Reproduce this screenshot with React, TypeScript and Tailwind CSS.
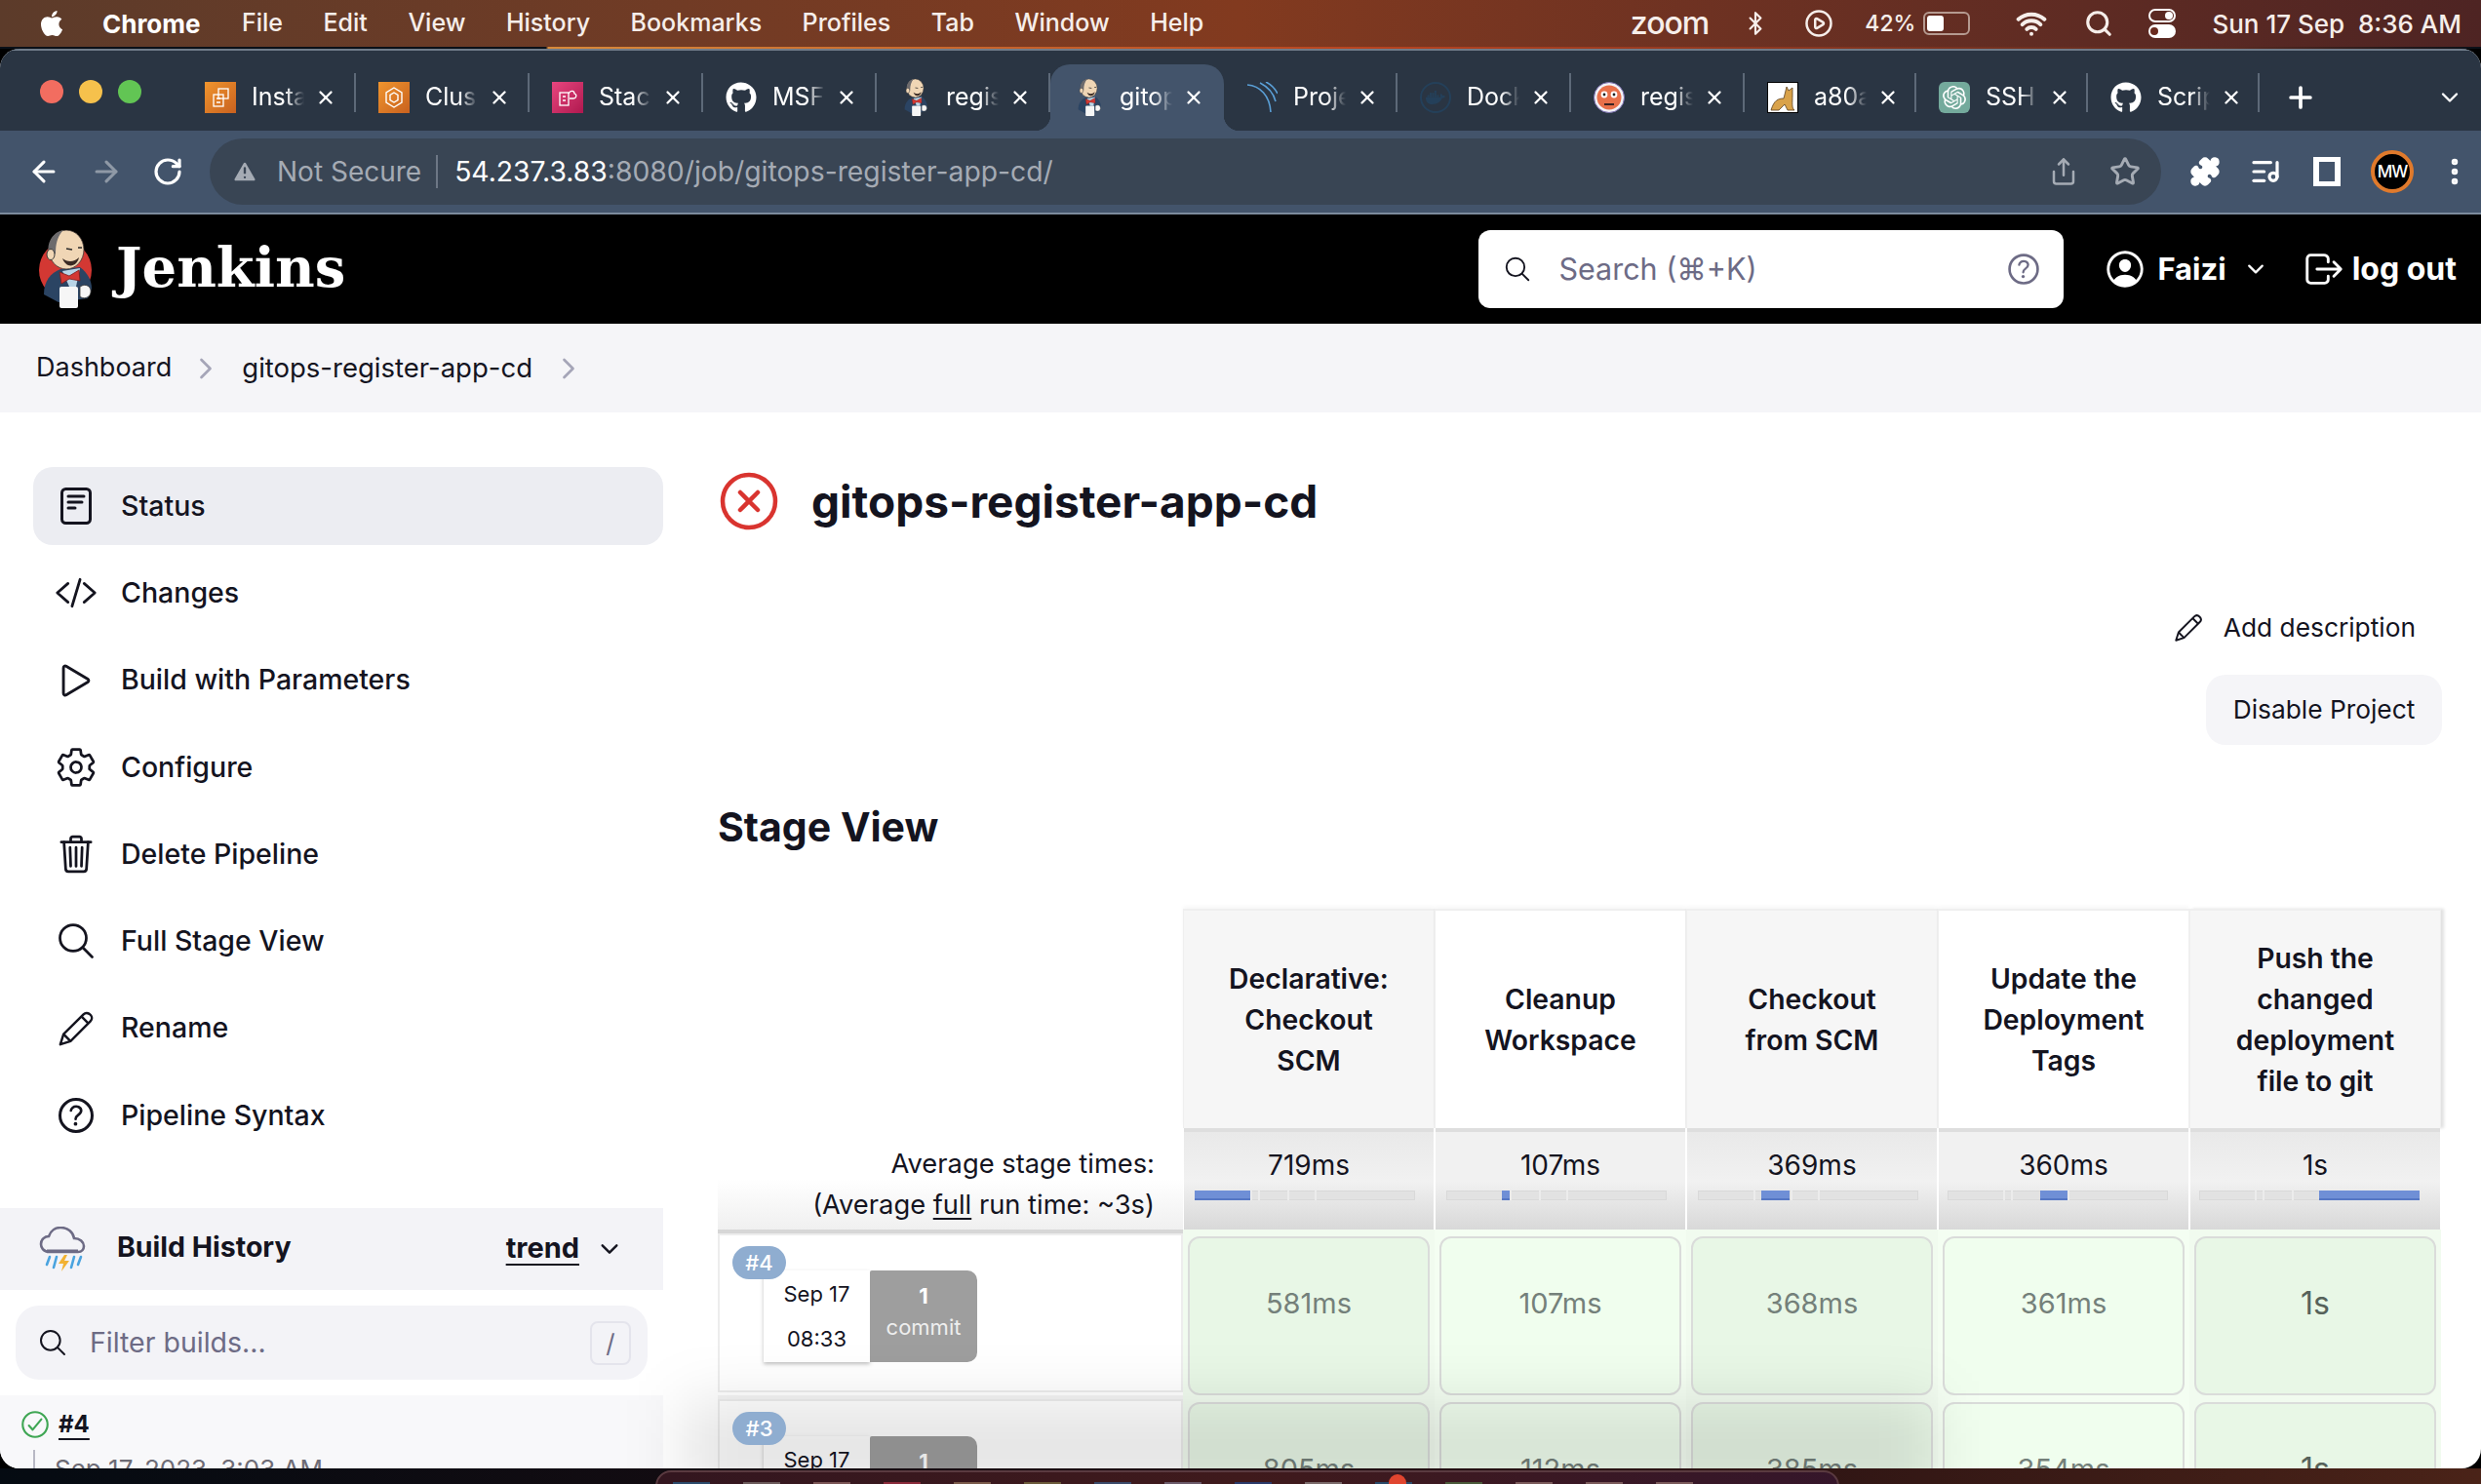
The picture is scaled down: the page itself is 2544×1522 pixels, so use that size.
import { ReactNode } from "react";
import {
  ArrowLeft,
  ArrowRight,
  Bluetooth,
  ChevronDown,
  ChevronRight,
  CirclePlay,
  ListMusic,
  MoreVertical,
  Plus,
  Puzzle,
  RotateCw,
  Search,
  Share,
  Star,
  TriangleAlert,
  Wifi,
  X,
} from "lucide-react";
import { FaApple, FaGithub, FaDocker } from "react-icons/fa";
import { SiOpenai } from "react-icons/si";
import {
  IoCheckmarkCircleOutline,
  IoChevronDown,
  IoCloseCircleOutline,
  IoCodeSlashOutline,
  IoHelpCircleOutline,
  IoLogOutOutline,
  IoPersonCircleOutline,
  IoPlayOutline,
  IoSearchOutline,
  IoSettingsOutline,
  IoTrashOutline,
} from "react-icons/io5";

function JenkinsLogo({ className, circle = true }: { className?: string; circle?: boolean }) {
  return (
    <svg viewBox="0 0 58 80" className={className}>
      {circle && <ellipse cx="29" cy="41" rx="27" ry="29" fill="#d33833" />}
      <path d="M7 66 C7 52 14 44 24 40 L44 38 C52 44 56 52 56 60 L52 70 L22 74 Z" fill="#2b4463" />
      <path d="M26 42 L44 39 L40 58 L33 58 Z" fill="#b8d4e6" />
      <ellipse cx="30" cy="20" rx="18" ry="20" fill="#f0d6b5" stroke="#3a3230" strokeWidth="0.8" />
      <path d="M13 28 C8 14 16 2 27 0 C21 6 19 14 19 24 Z" fill="#6d6b6d" />
      <ellipse cx="14" cy="25" rx="4" ry="5.5" fill="#f0d6b5" stroke="#3a3a3a" strokeWidth="1" />
      <path d="M30 19 L36 20 M42 18 L46 18" stroke="#2a2a2a" strokeWidth="1.6" />
      <path d="M26 29 C31 33 38 33 43 28 C41 38 30 40 26 29 Z" fill="#3a2a24" />
      <path d="M23 43 L33 47 L43 41 L44 52 L33 50 L25 55 Z" fill="#d33833" stroke="#7d1c1a" strokeWidth="0.8" />
      <rect x="23" y="58" width="19" height="22" rx="2" fill="#f6f6f6" />
      <path d="M44 58 C50 54 56 58 55 64 C54 70 47 71 44 68 Z" fill="#f6f6f6" stroke="#3a3a3a" strokeWidth="0.8" />
    </svg>
  );
}

function StatusIcon({ className }: { className?: string }) {
  return (
    <svg viewBox="0 0 32 38" fill="none" stroke="currentColor" strokeWidth="3" strokeLinecap="round" className={className}>
      <rect x="1.5" y="1.5" width="29" height="35" rx="4" />
      <path d="M8 9 H24 M8 15 H22 M8 21 H15" />
    </svg>
  );
}

function PencilIcon({ className }: { className?: string }) {
  return (
    <svg viewBox="0 0 40 40" fill="none" stroke="currentColor" strokeWidth="2.6" strokeLinejoin="round" className={className}>
      <path d="M3 37 L6.5 26 L28 4.5 C30 2.5 33 2.5 35.5 5 C37.5 7 37.5 10 35.5 12 L14 33.5 Z" />
      <path d="M26 7 L33 14 M6.5 26 L14 33.5" />
    </svg>
  );
}

function WeatherIcon() {
  return (
    <svg viewBox="0 0 48 46" className="h-[46px] w-[48px]" fill="none">
      <path
        d="M11 26 C4 26 2 21 2 18 C2 13 6 10 10 10 C12 4 17 1 22 1 C30 1 35 6 36 12 C42 12 46 16 46 20 C46 23 44 26 40 26 Z"
        stroke="#6d6b85"
        strokeWidth="2.6"
      />
      <path d="M8 25 H40" stroke="#6d6b85" strokeWidth="3" />
      <path d="M11 31 L8 39 M18 31 L15 42 M36 31 L33 42 M43 31 L40 39" stroke="#4aa3df" strokeWidth="2.6" strokeLinecap="round" />
      <path d="M26 29 L20 38 H25 L23 46 L31 35 H26 L29 29 Z" fill="#f2b233" />
    </svg>
  );
}

function Square({ bg, children }: { bg: string; children: ReactNode }) {
  return <div className={`flex h-[32px] w-[32px] items-center justify-center ${bg}`}>{children}</div>;
}

const tabs: { title: string; icon: ReactNode; active?: boolean; narrow?: boolean }[] = [
  {
    title: "Insta",
    icon: (
      <Square bg="bg-gradient-to-br from-[#f0952e] to-[#c8611f]">
        <svg viewBox="0 0 24 24" className="h-[24px] w-[24px]" fill="none" stroke="white" strokeWidth="1.3">
          <rect x="10" y="3" width="10" height="10" />
          <rect x="5" y="9" width="10" height="12" />
          <path d="M8 13 H12 M8 17 H12" />
        </svg>
      </Square>
    ),
  },
  {
    title: "Clus",
    icon: (
      <Square bg="bg-gradient-to-br from-[#f0952e] to-[#c8611f]">
        <svg viewBox="0 0 24 24" className="h-[24px] w-[24px]" fill="none" stroke="white" strokeWidth="1.4">
          <path d="M12 2 L20 7 V17 L12 22 L4 17 V7 Z" />
          <path d="M12 7 L16 9.5 V14.5 L12 17 L8 14.5 V9.5 Z" />
        </svg>
      </Square>
    ),
  },
  {
    title: "Stac",
    icon: (
      <Square bg="bg-gradient-to-br from-[#e7457f] to-[#b0174f]">
        <svg viewBox="0 0 24 24" className="h-[24px] w-[24px]" fill="none" stroke="white" strokeWidth="1.3">
          <rect x="4" y="7" width="9" height="13" />
          <path d="M7 11 H10 M7 15 H10 M13 8 C15 4 19 5 19 8 C22 9 21 13 18 13 H14" />
        </svg>
      </Square>
    ),
  },
  { title: "MSF", icon: <FaGithub className="h-[32px] w-[32px] text-white" /> },
  { title: "regis", icon: <JenkinsLogo circle={false} className="h-[38px] w-[28px]" /> },
  { title: "gitop", icon: <JenkinsLogo circle={false} className="h-[38px] w-[28px]" />, active: true },
  {
    title: "Proje",
    icon: (
      <svg viewBox="0 0 32 32" className="h-[32px] w-[32px]" fill="none" stroke="#5a9fd6" strokeWidth="1.6">
        <path d="M1 3 C14 4 24 14 25 31" />
        <path d="M14 1 C22 5 28 12 30 20" />
        <path d="M20 0 C26 3 30 8 32 12" />
      </svg>
    ),
  },
  {
    title: "Dock",
    icon: (
      <div className="flex h-[32px] w-[32px] items-center justify-center rounded-full border-[2px] border-[#24405a]">
        <FaDocker className="h-[20px] w-[20px] text-[#24405a]" />
      </div>
    ),
  },
  {
    title: "regis",
    icon: (
      <svg viewBox="0 0 32 32" className="h-[32px] w-[32px]">
        <circle cx="16" cy="16" r="15.5" fill="#f3f3f8" stroke="#7a6fb0" />
        <circle cx="16" cy="16" r="12.5" fill="#e8704a" />
        <circle cx="11" cy="13" r="3.4" fill="white" />
        <circle cx="21" cy="13" r="3.4" fill="white" />
        <circle cx="11" cy="13" r="1.4" fill="#222" />
        <circle cx="21" cy="13" r="1.4" fill="#222" />
        <path d="M11 23 H21" stroke="#3a2222" strokeWidth="2" />
      </svg>
    ),
  },
  {
    title: "a80a",
    narrow: true,
    icon: (
      <div className="flex h-[32px] w-[32px] items-center justify-center border border-black bg-white">
        <svg viewBox="0 0 30 30" className="h-[30px] w-[30px]">
          <path d="M3 28 C6 18 10 16 16 16 L19 4 L21 8 L25 5 L25 13 C25 20 24 26 27 28 H20 L17 22 L11 28 Z" fill="#d9a24a" stroke="#5a4020" strokeWidth="0.8" />
        </svg>
      </div>
    ),
  },
  {
    title: "SSH",
    narrow: true,
    icon: (
      <div className="flex h-[32px] w-[32px] items-center justify-center rounded-[6px] bg-[#74aa9c]">
        <SiOpenai className="h-[24px] w-[24px] text-white" />
      </div>
    ),
  },
  { title: "Scrip", narrow: true, icon: <FaGithub className="h-[32px] w-[32px] text-white" /> },
];

function ChromeTab({ title, icon, active, narrow }: { title: string; icon: ReactNode; active?: boolean; narrow?: boolean }) {
  return (
    <div
      className={`relative flex h-[68px] shrink-0 items-center pl-[23px] ${narrow ? "w-[176px]" : "w-[178px]"} ${active ? "rounded-t-[20px] bg-[#43546b]" : ""}`}
    >
      {active && (
        <>
          <div className="absolute bottom-0 right-full h-[16px] w-[16px] bg-[radial-gradient(circle_at_0%_0%,transparent_16px,#43546b_16.5px)]" />
          <div className="absolute bottom-0 left-full h-[16px] w-[16px] bg-[radial-gradient(circle_at_100%_0%,transparent_16px,#43546b_16.5px)]" />
        </>
      )}
      <div className="flex w-[32px] justify-center">{icon}</div>
      <span className="ml-[16px] w-[54px] overflow-hidden whitespace-nowrap text-[25px] text-white [mask-image:linear-gradient(to_right,black_65%,transparent)]">
        {title}
      </span>
      <X className="ml-[11px] h-[22px] w-[22px] text-white" strokeWidth={2.5} />
      {!active && <div className="absolute right-0 top-[9px] h-[40px] w-[2px] bg-[#5d6978]" />}
    </div>
  );
}

function MenuBar() {
  return (
    <div className="flex h-[48px] shrink-0 items-center bg-gradient-to-r from-[#5c3b2a] via-[#823a1f] to-[#4e2423] pl-[39px] pr-[20px] text-[25px] font-medium text-[#f6eeea]">
      <FaApple className="h-[30px] w-[28px] text-white" />
      <span className="ml-[38px] w-[102px] text-[26px] font-bold text-white">Chrome</span>
      <div className="ml-[41px] flex gap-[41.5px]">
        {["File", "Edit", "View", "History", "Bookmarks", "Profiles", "Tab", "Window", "Help"].map((m) => (
          <span key={m}>{m}</span>
        ))}
      </div>
      <div className="ml-auto flex items-center text-[26px]">
        <span className="mr-[35px] text-[32px] font-medium leading-none tracking-[-1px]">zoom</span>
        <Bluetooth className="mr-[37px] h-[30px] w-[26px]" />
        <CirclePlay className="mr-[32px] h-[30px] w-[30px]" />
        <span className="mr-[8px] text-[23px]">42%</span>
        <div className="relative mr-[47px] flex h-[24px] w-[48px] rounded-[6px] border-[2px] border-[#b59a90] p-[2px]">
          <div className="h-full w-[17px] rounded-[3px] bg-white" />
        </div>
        <Wifi className="mr-[38px] h-[32px] w-[32px]" strokeWidth={3} />
        <Search className="mr-[36px] h-[30px] w-[30px]" strokeWidth={2.5} />
        <div className="mr-[37px] flex flex-col gap-[2px]">
          <div className="flex h-[14px] w-[28px] items-center justify-end rounded-full border-[2px] border-white pr-[1px]">
            <div className="h-[8px] w-[8px] rounded-full bg-white" />
          </div>
          <div className="flex h-[14px] w-[28px] items-center rounded-full bg-white pl-[2px]">
            <div className="h-[8px] w-[8px] rounded-full bg-[#6a2a1e]" />
          </div>
        </div>
        <span>Sun 17 Sep&nbsp; 8:36 AM</span>
      </div>
    </div>
  );
}

function TabStrip() {
  return (
    <div className="relative flex h-[84px] shrink-0 items-end border-t-[2px] border-[#6f7b89] bg-[#2a3543] pl-[187px]">
      <div className="absolute left-[41px] top-[30px] flex gap-[16px]">
        <div className="h-[24px] w-[24px] rounded-full bg-[#f26d60]" />
        <div className="h-[24px] w-[24px] rounded-full bg-[#f6c14c]" />
        <div className="h-[24px] w-[24px] rounded-full bg-[#62c554]" />
      </div>
      {tabs.map((t, i) => (
        <ChromeTab key={i} {...t} />
      ))}
      <div className="flex h-[68px] flex-1 items-center pl-[25px] pr-[18px]">
        <Plus className="h-[34px] w-[34px] text-white" strokeWidth={2.6} />
        <ChevronDown className="ml-auto h-[28px] w-[28px] text-white" />
      </div>
    </div>
  );
}

function Toolbar() {
  return (
    <div className="flex h-[86px] shrink-0 items-start border-b-[2px] border-[#7c8a9c] bg-[#43546b] pt-[8px]">
      <div className="flex h-[68px] w-[215px] items-center pl-[28px] text-white">
        <ArrowLeft className="h-[34px] w-[34px]" strokeWidth={2.2} />
        <ArrowRight className="ml-[30px] h-[34px] w-[34px] text-[#8f99a6]" strokeWidth={2.2} />
        <RotateCw className="ml-[30px] h-[32px] w-[32px]" strokeWidth={2.4} />
      </div>
      <div className="flex h-[68px] w-[2001px] items-center rounded-full bg-[#394554] pl-[22px] pr-[21px] text-[28px]">
        <TriangleAlert className="h-[28px] w-[28px] fill-[#a5abb4] text-[#394554]" />
        <span className="ml-[19px] text-[#a5abb4]">Not Secure</span>
        <div className="ml-[15px] h-[34px] w-[2px] bg-[#6d7785]" />
        <span className="ml-[17px] text-[28.3px] text-white">54.237.3.83</span>
        <span className="text-[28.3px] text-[#a5abb4]">:8080/job/gitops-register-app-cd/</span>
        <Share className="ml-auto h-[30px] w-[30px] text-[#a5abb4]" />
        <Star className="ml-[32px] h-[32px] w-[32px] text-[#a5abb4]" strokeWidth={2.2} />
      </div>
      <div className="flex h-[68px] flex-1 items-center pl-[29px] text-white">
        <Puzzle className="h-[32px] w-[32px] fill-white" />
        <ListMusic className="ml-[30px] h-[32px] w-[32px]" strokeWidth={2.4} />
        <div className="ml-[33px] h-[30px] w-[28px] border-y-[5px] border-l-[6px] border-r-[6px] border-white" />
        <div className="ml-[31px] flex h-[44px] w-[44px] items-center justify-center rounded-full border-[4px] border-[#e07a2c] bg-black">
          <span className="text-[17px] font-medium leading-none tracking-[-1px]">MW</span>
        </div>
        <MoreVertical className="ml-[25px] h-[34px] w-[34px]" strokeWidth={2.6} />
      </div>
    </div>
  );
}

function JenkinsHeader() {
  return (
    <div className="flex h-[112px] shrink-0 items-center bg-black pl-[38px] pr-[25px] text-white">
      <JenkinsLogo className="h-[80px] w-[58px]" />
      <span className="mb-[5px] ml-[23px] font-['DejaVu_Serif',serif] text-[56px] font-bold leading-none">Jenkins</span>
      <div className="ml-auto flex h-[80px] w-[600px] items-center rounded-[12px] bg-white pl-[25px] pr-[20px] text-[#6d6b85]">
        <IoSearchOutline className="h-[30px] w-[30px] text-[#14141f]" />
        <span className="ml-[27px] text-[30.5px]">Search (⌘+K)</span>
        <IoHelpCircleOutline className="ml-auto h-[42px] w-[42px]" />
      </div>
      <IoPersonCircleOutline className="ml-[40px] h-[46px] w-[46px]" />
      <span className="ml-[10px] text-[31px] font-bold">Faizi</span>
      <IoChevronDown className="ml-[18px] h-[24px] w-[24px]" />
      <IoLogOutOutline className="ml-[35px] h-[46px] w-[46px]" />
      <span className="ml-[6px] text-[32px] font-bold">log out</span>
    </div>
  );
}

function Breadcrumb() {
  return (
    <div className="flex h-[91px] shrink-0 items-center bg-[#f5f5f8] pl-[37px] text-[27.5px] text-[#14141f]">
      <span className="text-[27px]">Dashboard</span>
      <ChevronRight className="ml-[17px] h-[36px] w-[36px] text-[#a5a5b8]" strokeWidth={1.8} />
      <span className="ml-[19px]">gitops-register-app-cd</span>
      <ChevronRight className="ml-[19px] h-[36px] w-[36px] text-[#a5a5b8]" strokeWidth={1.8} />
    </div>
  );
}

const sideItems = [
  { label: "Status", icon: <StatusIcon className="h-[38px] w-[32px]" /> },
  { label: "Changes", icon: <IoCodeSlashOutline className="h-[44px] w-[44px]" /> },
  { label: "Build with Parameters", icon: <IoPlayOutline className="h-[46px] w-[46px]" /> },
  { label: "Configure", icon: <IoSettingsOutline className="h-[44px] w-[44px]" /> },
  { label: "Delete Pipeline", icon: <IoTrashOutline className="h-[44px] w-[44px]" /> },
  { label: "Full Stage View", icon: <IoSearchOutline className="h-[44px] w-[44px]" /> },
  { label: "Rename", icon: <PencilIcon className="h-[38px] w-[38px]" /> },
  { label: "Pipeline Syntax", icon: <IoHelpCircleOutline className="h-[48px] w-[48px]" /> },
];

function Sidebar() {
  return (
    <div className="w-[680px] shrink-0 pt-[56px]">
      <div className="ml-[34px] flex flex-col gap-[9.3px]">
        {sideItems.map((item, i) => (
          <div
            key={item.label}
            className={`flex h-[80px] items-center rounded-[20px] pl-[20px] text-[28.5px] font-medium text-[#14141f] ${i === 0 ? "bg-[#ecedf2]" : ""}`}
          >
            <div className="flex w-[48px] justify-center">{item.icon}</div>
            <span className="ml-[22px]">{item.label}</span>
          </div>
        ))}
      </div>
      <div className="mt-[55px] flex h-[84px] items-center bg-[#f3f3f7] pl-[40px] pr-[42px] text-[#14141f]">
        <WeatherIcon />
        <span className="mb-[3px] ml-[32px] text-[28.5px] font-bold">Build History</span>
        <span className="mb-[3px] ml-auto text-[29px] font-bold underline underline-offset-[6px]">trend</span>
        <IoChevronDown className="ml-[18px] h-[26px] w-[26px]" />
      </div>
      <div className="mx-[16px] mt-[16px] flex h-[76px] items-center rounded-[24px] bg-[#f3f3f7] pl-[22px] pr-[17px] text-[#6d6b85]">
        <IoSearchOutline className="h-[32px] w-[32px] text-[#14141f]" />
        <span className="ml-[22px] text-[28.5px]">Filter builds...</span>
        <div className="ml-auto flex h-[45px] w-[42px] items-center justify-center rounded-[8px] border-[2px] border-[#e4e4ec] text-[26px]">/</div>
      </div>
      <div className="mt-[16px] h-[100px] bg-[#f8f8fa] pl-[19px] pt-[12px]">
        <div className="flex items-center">
          <IoCheckmarkCircleOutline className="h-[34px] w-[34px] text-[#3fa654]" />
          <span className="ml-[7px] text-[24px] font-bold text-[#14141f] underline underline-offset-[6px]">#4</span>
        </div>
        <div className="mt-[8px] flex items-start">
          <div className="ml-[15px] h-[30px] w-[2px] bg-[#b8b8c4]" />
          <span className="ml-[20px] text-[26px] text-[#6d6b75]">Sep 17, 2023, 3:03 AM</span>
        </div>
      </div>
    </div>
  );
}

const stages = [
  { lines: ["Declarative:", "Checkout", "SCM"], avg: "719ms", from: 0, width: 57 },
  { lines: ["Cleanup", "Workspace"], avg: "107ms", from: 57, width: 8 },
  { lines: ["Checkout", "from SCM"], avg: "369ms", from: 65, width: 29 },
  { lines: ["Update the", "Deployment", "Tags"], avg: "360ms", from: 95, width: 28 },
  { lines: ["Push the", "changed", "deployment", "file to git"], avg: "1s", from: 123, width: 103 },
];

const builds = [
  { id: "#4", times: ["581ms", "107ms", "368ms", "361ms", "1s"], time: "08:33" },
  { id: "#3", times: ["805ms", "112ms", "385ms", "354ms", "1s"], time: "08:31" },
];

function StageBar({ from, width, shifted }: { from: number; width: number; shifted: boolean }) {
  return (
    <div className={`relative h-[10px] w-[226px] bg-[#e2e2e2] shadow-[inset_0_0_0_1px_#d9d9d9] ${shifted ? "ml-[9px]" : "ml-[11px]"}`}>
      {[57, 65, 95, 123].map((x) => (
        <div key={x} className="absolute bottom-0 top-0 w-[2px] bg-[#ececec]" style={{ left: x }} />
      ))}
      <div className="absolute bottom-0 top-0 bg-[#6f8fd6] shadow-[inset_0_-2px_0_#5577c4]" style={{ left: from, width }} />
    </div>
  );
}

function StageView() {
  return (
    <div className="mt-[63px] grid w-[1767px] grid-cols-[477px_repeat(5,258px)] text-[#14141f]">
      <div />
      {stages.map((s, i) => (
        <div
          key={i}
          className={`flex h-[225px] flex-col items-center justify-center border-x border-t-[2px] border-[#efefef] text-[28.3px] font-semibold leading-[42px] ${i % 2 === 0 ? "bg-[#f6f6f6]" : "bg-white"} ${i === 4 ? "shadow-[3px_0_3px_rgba(0,0,0,0.12)]" : "shadow-[0_-3px_4px_rgba(0,0,0,0.03)]"}`}
        >
          {s.lines.map((l) => (
            <span key={l}>{l}</span>
          ))}
        </div>
      ))}

      <div className="h-[104px] bg-gradient-to-b from-white via-white to-[#f0f0f0] pr-[29px] pt-[16px] text-right text-[27.3px] leading-[42px]">
        <div>Average stage times:</div>
        <div>
          (Average <span className="underline underline-offset-[4px]">full</span> run time: ~3s)
        </div>
      </div>
      {stages.map((s, i) => (
        <div
          key={i}
          className={`mx-[1px] h-[104px] border-t-[4px] border-[#dedede] ${i % 2 === 0 ? "bg-gradient-to-b from-[#e9e9e9] via-[#f1f1f1] to-[#d8d8d8]" : "bg-gradient-to-b from-[#f1f1f1] via-[#f1f1f1] to-[#d8d8d8]"}`}
        >
          <div className="pt-[13px] text-center text-[28px] leading-[42px]">{s.avg}</div>
          <div className="mt-[5px]">
            <StageBar from={s.from} width={s.width} shifted={i >= 3} />
          </div>
        </div>
      ))}

      {builds.map((b, r) => (
        <BuildRow key={b.id} id={b.id} times={b.times} time={b.time} first={r === 0} />
      ))}
    </div>
  );
}

function BuildRow({ id, times, time, first }: { id: string; times: string[]; time: string; first: boolean }) {
  return (
    <>
      <div className={`relative h-[170px] border-t-[4px] ${first ? "border-[#d7d7d7]" : "border-[#f4f4f4]"}`}>
        <div className="relative h-[163px] border-[2px] border-[#ededed] bg-white pl-[45px] pt-[36px]">
          <div className="absolute left-[13px] top-[11px] z-10 flex h-[34px] w-[55px] items-center justify-center rounded-[17px] bg-[#8fadd0] text-[22px] font-medium text-white">
            {id}
          </div>
          <div className="flex h-[94px] w-[219px]">
            <div className="flex w-[109px] flex-col items-center justify-between bg-white py-[10px] text-[22px] leading-[28px] shadow-[0_2px_4px_rgba(0,0,0,0.25)]">
              <span>Sep 17</span>
              <span>{time}</span>
            </div>
            <div className="flex w-[110px] flex-col items-center rounded-r-[10px] rounded-tl-[2px] bg-[#9e9e9e] pt-[9px] text-white">
              <span className="text-[22px] font-bold leading-[34px]">1</span>
              <span className="text-[22px] leading-[30px] text-[#eeeeee]">commit</span>
            </div>
          </div>
        </div>
      </div>
      {times.map((t, i) => (
        <div key={i} className={`h-[170px] px-[5px] pt-[7px] ${i % 2 === 0 ? "bg-[#f1fbef]" : "bg-[#f4fef2]"}`}>
          <div
            className={`flex h-[163px] justify-center rounded-[12px] border-[2px] border-[#dadcda] pt-[46px] leading-[42px] ${i % 2 === 0 ? "bg-[#e8f7e6]" : "bg-[#f0feee]"} ${i === 4 ? "text-[32px] text-[#56625a]" : "text-[29px] text-[#74807a]"}`}
          >
            {t}
          </div>
        </div>
      ))}
    </>
  );
}

function Main() {
  return (
    <div className="flex-1 pl-[56px] pr-[40px] pt-[61px] text-[#14141f]">
      <div className="flex h-[60px] items-center">
        <IoCloseCircleOutline className="ml-[-4px] h-[72px] w-[72px] text-[#d9342f]" />
        <h1 className="ml-[28px] text-[46px] font-bold leading-none">gitops-register-app-cd</h1>
      </div>
      <div className="mt-[80px] flex flex-col items-end">
        <div className="flex h-[40px] items-center pr-[27px] text-[26.3px]">
          <PencilIcon className="h-[30px] w-[30px]" />
          <span className="ml-[21px]">Add description</span>
        </div>
        <div className="mt-[28px] flex h-[72px] w-[242px] items-center justify-center rounded-[20px] bg-[#f5f5f8] text-[26.3px]">
          Disable Project
        </div>
      </div>
      <h2 className="mt-[64px] text-[41px] font-bold leading-none">Stage View</h2>
      <StageView />
    </div>
  );
}

function BottomStrip() {
  const dockBits = ["#2b4a6b", "#6b5a5a", "#7a5555", "#8a2a3a", "#7a5a4a", "#6b5a3a", "#3a4a6a", "#6b5a6a", "#2a3a6a", "#7a6a6a", "#2a4a6a", "#4a5a3a", "#7a5a5a", "#7a5a5a", "#7a5a5a"];
  return (
    <div className="relative h-[16px] shrink-0 overflow-hidden bg-gradient-to-r from-[#050b12] via-[#1c0b10] to-[#4a2318] pl-[672px]">
      <div className="mt-[2px] flex h-[20px] w-[1214px] gap-[34px] rounded-t-[16px] border-[2px] border-[#5a3a40] bg-gradient-to-r from-[#33161f] via-[#3f1a1c] to-[#35162a] pl-[16px] pt-[10px]">
        {dockBits.map((c, i) => (
          <div key={i} className="h-[6px] w-[38px] shrink-0" style={{ backgroundColor: c }} />
        ))}
      </div>
      <div className="absolute left-[1424px] top-[6px] h-[18px] w-[18px] rounded-full bg-[#e0452f]" />
    </div>
  );
}

export default function App() {
  return (
    <div className="flex h-[1522px] w-[2544px] flex-col overflow-hidden bg-black font-['Inter',sans-serif]">
      <MenuBar />
      <div className="h-[2px] shrink-0 bg-[linear-gradient(to_right,#0a1018_0%,#0a1018_22%,#d98a3a_22.1%,#b8431f_55%,#5a2a20_90%,#0a1018_100%)]" />
      <div className="relative flex h-[1456px] shrink-0 flex-col overflow-hidden rounded-[20px] bg-white">
        <TabStrip />
        <Toolbar />
        <JenkinsHeader />
        <Breadcrumb />
        <div className="flex flex-1">
          <Sidebar />
          <Main />
        </div>
        <div className="pointer-events-none absolute bottom-[-30px] left-[700px] right-[560px] h-[100px] bg-black/10 blur-[30px]" />
      </div>
      <BottomStrip />
    </div>
  );
}
